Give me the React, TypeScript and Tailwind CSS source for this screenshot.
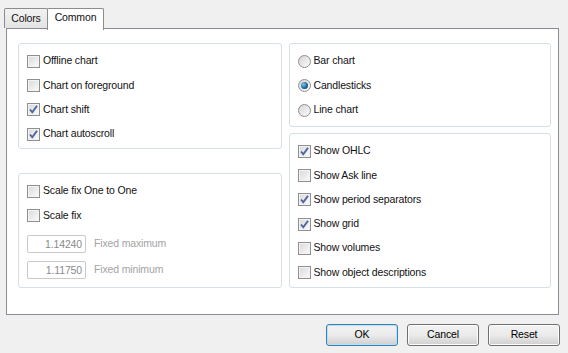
import React from 'react';

const font = { fontFamily: '"Liberation Sans", Arial, sans-serif' };

const CheckBox = ({ checked }: { checked?: boolean }) => (
    <span className="relative w-[13px] h-[13px] border border-[#8f8f8f] bg-white flex items-center justify-center shrink-0">
        <span className="w-[11px] h-[11px] border border-[#f4f4f4] bg-gradient-to-br from-[#dcdcdc] to-[#f8f8f8] flex items-center justify-center">
            {checked && (
                <svg width="11" height="11" viewBox="0 0 11 11" className="absolute left-0 top-0">
                    <path d="M2 5.5 L4.3 8.3 L9 1.8" stroke="#4d64a0" strokeWidth="1.9" fill="none" />
                </svg>
            )}
        </span>
    </span>
);

const Radio = ({ checked }: { checked?: boolean }) => (
    <span className="w-[13px] h-[13px] rounded-full border border-[#8f8f8f] bg-gradient-to-br from-[#d6d6d6] to-[#fbfbfb] flex items-center justify-center shrink-0">
        {checked && <span className="w-[7px] h-[7px] rounded-full bg-[radial-gradient(circle_at_35%_35%,#7cc8ec,#1a5f95_60%,#0b3d66)]" />}
    </span>
);

const CheckRow = ({ label, checked }: { label: string; checked?: boolean }) => (
    <div className="h-[24.3px] flex items-center gap-[3px] pl-[8px]">
        <CheckBox checked={checked} />
        <span>{label}</span>
    </div>
);

const RadioRow = ({ label, checked }: { label: string; checked?: boolean }) => (
    <div className="h-[24.5px] flex items-center gap-[3px] pl-[8px]">
        <Radio checked={checked} />
        <span>{label}</span>
    </div>
);

const FixedInput = ({ value, label }: { value: string; label: string }) => (
    <div className="flex items-center gap-[8px] pl-[8px] h-[18px]">
        <div className="w-[59px] h-[18px] border border-[#c9c9c9] rounded-[2px] bg-white text-right pr-[3px] leading-[16px] text-[#8a8a8a]">{value}</div>
        <span className="text-[#a3a3a3]">{label}</span>
    </div>
);

const Button = ({ label, focused }: { label: string; focused?: boolean }) => (
    <button
        className={
            'w-[72px] h-[22px] rounded-[3px] border text-black ' +
            (focused
                ? 'border-[#3c7fb1] bg-gradient-to-b from-[#f2f2f2] via-[#ebebeb] to-[#cfcfcf] shadow-[inset_0_0_0_1px_#b6e2f9]'
                : 'border-[#707070] bg-gradient-to-b from-[#f2f2f2] via-[#ebebeb] to-[#cfcfcf] shadow-[inset_0_0_0_1px_#fcfcfc]')
        }
    >
        {label}
    </button>
);

export default function App() {
    return (
        <div className="w-[568px] h-[353px] bg-[#f0f0f0] text-[10.5px] tracking-[-0.15px] text-[#111] overflow-hidden" style={font}>
            <div className="flex items-end pl-[4px] pt-[7px] h-[29px] relative z-10">
                <div className="w-[44px] h-[20px] border border-b-0 border-[#8c8c8c] rounded-t-[2px] bg-gradient-to-b from-[#f2f2f2] to-[#e3e3e3] flex items-center justify-center mb-[1px] leading-none">Colors</div>
                <div className="w-[57px] h-[22px] border border-b-0 border-[#8c8c8c] rounded-t-[2px] bg-white flex items-start justify-center pt-[3px] -ml-[1px] -mb-[1px] leading-none">Common</div>
            </div>
            <div className="ml-[6px] mr-[9px] h-[287px] -mt-[1px] bg-white border border-[#898c95] pl-[11px] pr-[7px] pt-[14px] flex gap-[7px]">
                <div className="w-[264px] flex flex-col">
                    <div className="h-[106px] border border-[#d5dfe5] rounded-[3px] pt-[5px]">
                        <CheckRow label="Offline chart" />
                        <CheckRow label="Chart on foreground" />
                        <CheckRow label="Chart shift" checked />
                        <CheckRow label="Chart autoscroll" checked />
                    </div>
                    <div className="h-[115px] mt-[24px] border border-[#d5dfe5] rounded-[3px] pt-[5px]">
                        <CheckRow label="Scale fix One to One" />
                        <CheckRow label="Scale fix" />
                        <div className="mt-[7px] flex flex-col gap-[8px]">
                            <FixedInput value="1.14240" label="Fixed maximum" />
                            <FixedInput value="1.11750" label="Fixed minimum" />
                        </div>
                    </div>
                </div>
                <div className="w-[263px] flex flex-col">
                    <div className="h-[84px] border border-[#d5dfe5] rounded-[3px] pt-[5px]">
                        <RadioRow label="Bar chart" />
                        <RadioRow label="Candlesticks" checked />
                        <RadioRow label="Line chart" />
                    </div>
                    <div className="h-[155px] mt-[6px] border border-[#d5dfe5] rounded-[3px] pt-[5px]">
                        <CheckRow label="Show OHLC" checked />
                        <CheckRow label="Show Ask line" />
                        <CheckRow label="Show period separators" checked />
                        <CheckRow label="Show grid" checked />
                        <CheckRow label="Show volumes" />
                        <CheckRow label="Show object descriptions" />
                    </div>
                </div>
            </div>
            <div className="flex justify-end gap-[9px] pr-[8px] pt-[9px]">
                <Button label="OK" focused />
                <Button label="Cancel" />
                <Button label="Reset" />
            </div>
        </div>
    );
}
